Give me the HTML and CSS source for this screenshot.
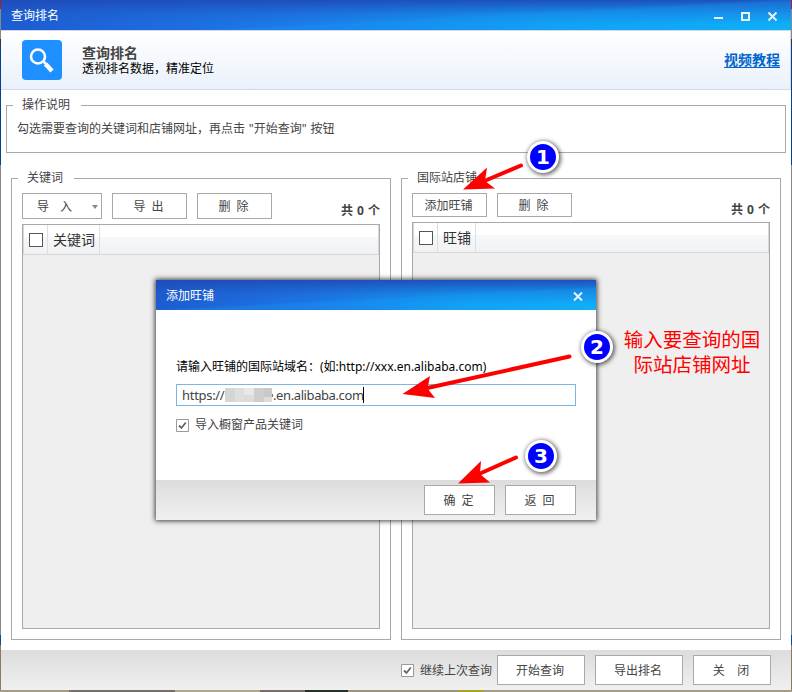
FILE: index.html
```html
<!DOCTYPE html>
<html lang="zh-CN">
<head>
<meta charset="utf-8">
<title>查询排名</title>
<link rel="stylesheet" href="styles.css">
</head>
<body>
<div class="window">
  <header class="titlebar">
    <span>查询排名</span>
    <svg class="controls" width="64" height="12" viewBox="0 0 64 12" fill="none" stroke="#e4f3ff" stroke-width="2">
      <path d="M0 8h9M28 3h7v7h-7z"/><path d="M54.500 2.500l8 8M62.500 2.500l-8 8"/>
    </svg>
  </header>
  <section class="banner">
    <div class="logo">
      <svg width="40" height="40" viewBox="0 0 40 40" fill="none" stroke="#fff">
        <circle cx="16" cy="16.500" r="7" stroke-width="2.600"/>
        <path d="M21 21l3 3" stroke-width="2.500"/><path d="M23.500 24l6.500 7" stroke-width="4.500"/>
      </svg>
    </div>
    <div class="heading"><h1>查询排名</h1><p>透视排名数据，精准定位</p></div>
    <a class="tutorial">视频教程</a>
  </section>
  <section class="group help">
    <h2 class="legend">操作说明</h2>
    <p>勾选需要查询的关键词和店铺网址，再点击 "开始查询" 按钮</p>
  </section>
  <main class="columns">
    <section class="group pane">
      <h2 class="legend">关键词</h2>
      <div class="toolbar">
        <button class="btn menu"><span>导</span><span>入</span><i class="caret"></i></button>
        <button class="btn">导&nbsp; 出</button>
        <button class="btn">删&nbsp; 除</button>
        <span class="count">共 0 个</span>
      </div>
      <div class="table">
        <div class="thead"><span class="cell pick"><i class="box"></i></span><span class="cell name">关键词</span></div>
      </div>
    </section>
    <section class="group pane shops">
      <h2 class="legend">国际站店铺</h2>
      <div class="toolbar">
        <button class="btn">添加旺铺</button>
        <button class="btn">删&nbsp; 除</button>
        <span class="count">共 0 个</span>
      </div>
      <div class="table">
        <div class="thead"><span class="cell pick"><i class="box"></i></span><span class="cell name">旺铺</span></div>
      </div>
    </section>
  </main>
  <footer class="actions">
    <label class="check"><svg width="13" height="13" viewBox="0 0 13 13"><path d="M.5.500h12v12H.5z" fill="#fff" stroke="#999"/><path d="M3 6.500l2.500 2.500L9.800 3.500" fill="none" stroke="#666" stroke-width="1.800"/></svg><span>继续上次查询</span></label>
    <button class="btn">开始查询</button>
    <button class="btn">导出排名</button>
    <button class="btn close">关&nbsp; &nbsp; 闭</button>
  </footer>
</div>

<div class="dialog">
  <header class="titlebar">
    <span>添加旺铺</span>
    <svg class="controls" width="10" height="12" viewBox="0 0 10 12" fill="none" stroke="#e4f3ff" stroke-width="2"><path d="M1 2.500l8 8M9 2.500l-8 8"/></svg>
  </header>
  <div class="form">
    <div class="prompt"><span>请输入旺铺的国际站域名：</span><span class="sample">(如:http://xxx.en.alibaba.com)</span></div>
    <div class="field"><span class="scheme">https://</span><svg class="mask" width="49" height="14" viewBox="0 0 49 14"><path fill="#d5d5d5" d="M0 0h10v14H0z"/><path fill="#dedede" d="M10 0h9v14h-9z"/><path fill="#e8e8e8" d="M19 0h10v7H19z"/><path fill="#dcdcdc" d="M19 7h10v7H19z"/><path fill="#cecece" d="M29 0h10v14H29z"/><path fill="#c9c9c9" d="M39 0h8v9h-8z"/><path fill="#ddd" d="M39 9h8v5h-8z"/><path fill="#777" d="M47 6h1v3h-1z"/></svg><span class="domain">.en.alibaba.com</span><i class="cursor"></i></div>
    <label class="check"><svg width="13" height="13" viewBox="0 0 13 13"><path d="M.5.500h12v12H.5z" fill="#fff" stroke="#999"/><path d="M3 6.500l2.500 2.500L9.800 3.500" fill="none" stroke="#666" stroke-width="1.800"/></svg>导入橱窗产品关键词</label>
  </div>
  <footer class="dialog-actions"><button class="btn">确&nbsp; 定</button><button class="btn">返&nbsp; 回</button></footer>
</div>

<svg class="arrows" width="792" height="692" viewBox="0 0 792 692" fill="#f00" stroke="#f00">
  <path d="M521 165.500L482 182" stroke-width="4" stroke-linecap="round"/>
  <path stroke="none" d="M463 189.500L487 167.500L485 181L495 188.500z"/>
  <path d="M569.500 356.500L425 388.500" stroke-width="4" stroke-linecap="round"/>
  <path stroke="none" d="M402.500 394L430 376L427.500 388.500L435 398z"/>
  <path d="M516 457.500L479 474" stroke-width="4" stroke-linecap="round"/>
  <path stroke="none" d="M458 483.500L481 461L480 474L490 482.500z"/>
</svg>
<b class="badge one">1</b>
<b class="badge two">2</b>
<b class="badge three">3</b>
<div class="note">输入要查询的国<br>际站店铺网址</div>
</body>
</html>
```
FILE: styles.css
```css
* { box-sizing: border-box; }
body {
  margin: 0;
  width: 792px;
  height: 692px;
  padding: 0 1px 2px;
  overflow: hidden;
  position: relative;
  font: 12px/16px "Noto Sans", "Noto Sans CJK SC", sans-serif;
  color: #444;
  background:
    linear-gradient(90deg, #a69c83 0 69px, #74706a 69px 175px, #b0a78b 175px 260px, #776e68 260px 305px, #263226 305px 348px, #9b927d 348px 458px, #a9a326 458px 484px, #a69c86 484px) 0 690px / 792px 2px no-repeat,
    linear-gradient(#a82020 0 9px, #888 9px 39px, #333 39px 45px, #06428c 45px 165px, #888 165px 635px, #0a4b9a 635px 645px, #887c68 645px);
}
h1, h2, p { margin: 0; font-weight: normal; }
.window {
  height: 690px;
  display: flex;
  flex-direction: column;
  background: #fff;
}
.titlebar {
  height: 30px;
  flex: none;
  display: flex;
  align-items: center;
  justify-content: space-between;
  padding: 1px 13px 0 10px;
  color: #fff;
  background:
    linear-gradient(177deg, transparent 55%, rgba(22, 150, 245, .35) 60%, transparent 100%),
    linear-gradient(180deg, rgba(30, 76, 185, .95), rgba(30, 90, 200, .35) 45%, transparent 80%),
    linear-gradient(90deg, #1d5bd0, #1c78e8 35%, #0fa5f5 70%, #0fb0f8);
}
.controls { display: block; }
.banner {
  height: 60px;
  flex: none;
  display: flex;
  padding: 9px 10px 0 21px;
  border: solid #d5d8e0;
  border-width: 1px 1px 1px 0;
  background: linear-gradient(#fff, #eaf1fb);
}
.logo {
  width: 40px;
  height: 40px;
  border-radius: 4px;
  background: #1e90ff;
}
.logo svg { display: block; }
.heading { margin: 4px 0 0 20px; color: #000; }
.heading h1 { font-size: 14px; line-height: 17px; font-weight: bold; color: #444; }
.heading p { line-height: 16px; }
.tutorial {
  margin: 10px 0 0 auto;
  height: 18px;
  border-bottom: 1px solid #06c;
  font-size: 14px;
  line-height: 20px;
  font-weight: bold;
  color: #06c;
}
.group { border: 1px solid #a9a9a9; }
.legend {
  width: max-content;
  height: 16px;
  margin-top: -10px;
  padding: 0 11px 0 9px;
  background: #fff;
  font-size: 12px;
  line-height: 17px;
}
.help { height: 48px; margin: 15px 5px 0; flex: none; }
.help .legend { margin-left: 6px; }
.help p { padding: 9px 10px; word-spacing: .7px; }
.columns { display: flex; gap: 10px; padding: 25px 10px 0; height: 487px; }
.pane {
  width: 380px;
  height: 462px;
  padding: 0 10px 10px;
  display: flex;
  flex-direction: column;
}
.pane .legend { margin-left: -4px; flex: none; }
.toolbar { display: flex; gap: 10px; height: 26px; margin-top: 8px; flex: none; }
.btn {
  width: 75px;
  padding: 1px 2px 0 0;
  border: 1px solid #a9a9a9;
  background: #fff;
  color: #444;
  font: inherit;
}
.menu { width: 80px; display: flex; align-items: center; padding-left: 14px; }
.menu span { margin-right: 11px; }
.caret {
  margin-left: 9px;
  border: solid transparent;
  border-width: 4px 3px 0;
  border-top-color: #888;
}
.count { margin: 10px 0 0 auto; font-weight: bold; word-spacing: 1px; }
.table {
  flex: 1;
  margin-top: 5px;
  border: 1px solid #a9a9a9;
  background: #efefef;
}
.thead {
  display: flex;
  height: 30px;
  border: 1px solid #d5d7da;
  border-top: 0;
  background: linear-gradient(#fff 0 12px, #f6f8fa 12px, #eff1f3);
}
.cell { border-right: 1px solid #dcdee1; display: flex; align-items: center; }
.pick { width: 24px; padding-left: 5px; }
.box { width: 14px; height: 14px; border: 1px solid #555; background: #fff; }
.name { width: 52px; padding-left: 5px; font-size: 14px; color: #333; }
.shops .name { width: 38px; }
.shops .toolbar { height: 24px; }
.shops .count { margin-top: 9px; }
.actions {
  height: 40px;
  margin-top: auto;
  padding: 5px 20px 5px 0;
  display: flex;
  justify-content: flex-end;
  gap: 10px;
  background: linear-gradient(#dcdcdc, #f0f0f0);
}
.actions .btn { width: 88px; }
.actions .close { width: 78px; }
.check { display: flex; align-items: center; gap: 6px; }
.actions .check { margin-right: -5px; }
.actions .check span { padding-top: 2px; }
.dialog {
  position: absolute;
  left: 156px;
  top: 280px;
  width: 440px;
  height: 240px;
  display: flex;
  flex-direction: column;
  background: #fff;
  box-shadow: 0 0 5px 1px rgba(0, 0, 0, .75);
}
.form { flex: 1; padding: 49px 20px 0; }
.prompt { display: flex; color: #000; white-space: nowrap; }
.field {
  height: 22px;
  margin-top: 9px;
  padding-left: 5px;
  border: 1px solid #80b5df;
  display: flex;
  align-items: center;
  font-size: 13px;
  white-space: nowrap;
}
.scheme { width: 43px; letter-spacing: -.3px; }
.mask { flex: none; margin-right: -1px; }
.domain { width: 90px; letter-spacing: -.4px; }
.cursor { width: 1px; height: 16px; background: #000; }
.form .check { margin-top: 11px; }
.dialog-actions {
  height: 40px;
  padding: 5px 20px;
  display: flex;
  justify-content: flex-end;
  gap: 10px;
  background: linear-gradient(#dcdcdc, #f0f0f0);
}
.dialog-actions .btn { width: 71px; }
.arrows { position: absolute; left: 0; top: 0; }
.badge {
  position: absolute;
  width: 32px;
  height: 32px;
  border: 3px solid #fff;
  border-radius: 50%;
  background: #00f;
  box-shadow: 1px 1px 4px 1px rgba(0, 0, 0, .6);
  color: #fff;
  font: bold 20px/26px "DejaVu Sans", sans-serif;
  text-align: center;
}
.one { left: 527px; top: 141px; }
.two { left: 581px; top: 331px; }
.three { left: 525px; top: 440px; }
.note {
  position: absolute;
  left: 614px;
  top: 327px;
  width: 156px;
  color: #f00;
  font-size: 19.5px;
  line-height: 25px;
  text-align: center;
}
```
